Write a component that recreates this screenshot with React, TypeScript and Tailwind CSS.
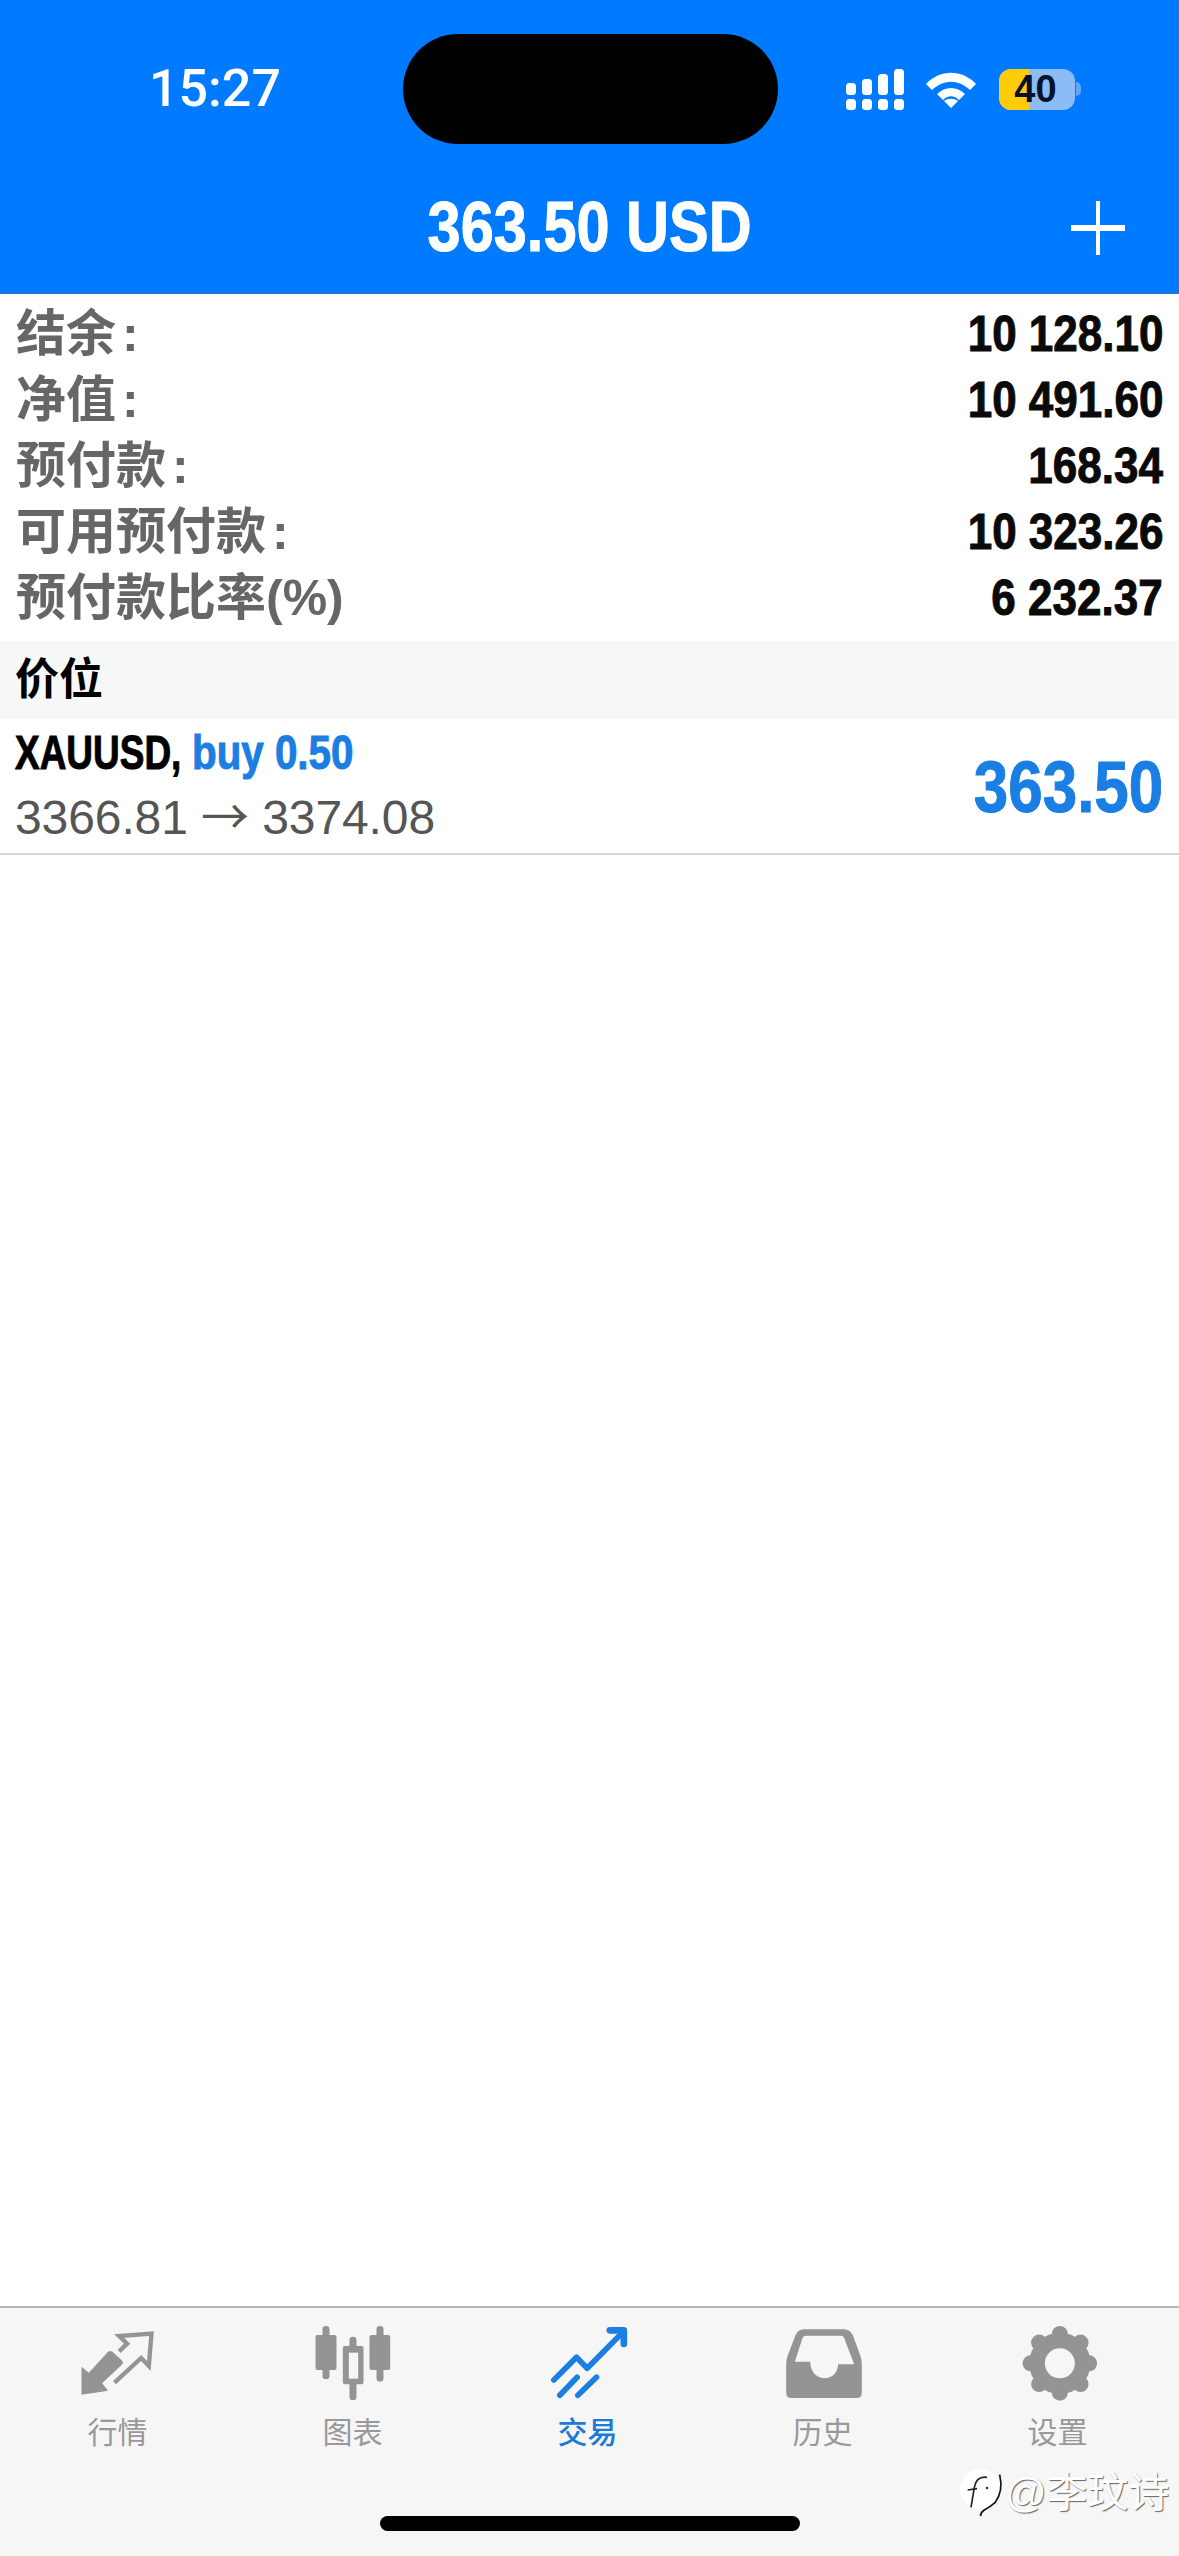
import React from "react";

const SANS = "font-['Liberation_Sans','Noto_Sans_CJK_SC',sans-serif]";

const rows = [
  { label: "结余", colon: true, value: "10 128.10" },
  { label: "净值", colon: true, value: "10 491.60" },
  { label: "预付款", colon: true, value: "168.34" },
  { label: "可用预付款", colon: true, value: "10 323.26" },
  { label: "预付款比率(%)", colon: false, value: "6 232.37" },
];

function Signal() {
  return (
    <svg width="58" height="41" viewBox="0 0 58 41" className="shrink-0">
      <g fill="#fff">
        <rect x="0" y="30" width="10" height="11" rx="3.5" />
        <rect x="16" y="30" width="10" height="11" rx="3.5" />
        <rect x="32" y="30" width="10" height="11" rx="3.5" />
        <rect x="48" y="30" width="10" height="11" rx="3.5" />
        <rect x="0" y="14" width="10" height="12" rx="3.5" />
        <rect x="16" y="10" width="10" height="16" rx="3.5" />
        <rect x="32" y="5" width="10" height="21" rx="3.5" />
        <rect x="48" y="0" width="10" height="26" rx="3.5" />
      </g>
    </svg>
  );
}

function Wifi() {
  return (
    <svg width="50" height="38" viewBox="0 0 50 38" className="shrink-0">
      <path d="M0 14 C14 -1 36 -1 50 14 L44 20 C32 9 18 9 6 20 Z" fill="#fff" />
      <path d="M11 24 C19 16 31 16 39 24 L33 30 C28 25 22 25 17 30 Z" fill="#fff" />
      <path d="M25 38 L18 31 C22 28 28 28 32 31 Z" fill="#fff" />
    </svg>
  );
}

function Battery() {
  return (
    <div className="flex items-center shrink-0">
      <div className="relative w-[76px] h-[41px] rounded-[12px] overflow-hidden bg-[#8cbcf6] flex">
        <div className="w-[30px] bg-[#ffcc0a]" />
        <div className={`absolute inset-0 flex items-center justify-center text-[38px] font-bold text-[#06122a] pr-[3px] ${SANS}`}>
          40
        </div>
      </div>
      <div className="w-[5px] h-[14px] ml-[1px] rounded-r-full bg-[#5fa6f7]" />
    </div>
  );
}

const GRAY = "#949494";
const BLUE = "#1a7ee2";

function IconBox({ children }: { children: React.ReactNode }) {
  return (
    <svg width="100" height="90" viewBox="-7.5 0 300 270" className="shrink-0">
      {children}
    </svg>
  );
}

function MarketIcon() {
  return (
    <IconBox>
      <path d="M33 224 L33 140 L55 158 L112 96 Q119 90 126 95 L155 122 Q160 128 154 134 L95 190 L113 212 Z" fill={GRAY} />
      <path
        d="M146 94 L170 71 L146 48 L243 41 L235 138 L212 114 L132 188"
        fill="none"
        stroke={GRAY}
        strokeWidth="13"
        strokeLinejoin="miter"
      />
    </IconBox>
  );
}

function ChartIcon() {
  return (
    <IconBox>
      <g fill={GRAY}>
        <rect x="51" y="18" width="21" height="160" rx="10" />
        <rect x="30" y="45" width="63" height="105" rx="6" />
        <rect x="213" y="18" width="21" height="167" rx="10" />
        <rect x="192" y="45" width="62" height="105" rx="6" />
        <rect x="132" y="50" width="21" height="190" rx="10" />
        <rect x="112" y="78" width="62" height="115" rx="6" />
      </g>
      <rect x="130" y="98" width="28" height="78" fill="#f6f6f6" />
    </IconBox>
  );
}

function TradeIcon() {
  return (
    <IconBox>
      <g fill="none" stroke={BLUE} strokeLinecap="round" strokeLinejoin="round">
        <path d="M40 180 L108 112 L140 145 L238 46" strokeWidth="17" />
        <path d="M208 31 L250 31 L250 72" strokeWidth="20" />
        <path d="M58 226 L110 172" strokeWidth="17" />
        <path d="M112 226 L168 172" strokeWidth="17" />
      </g>
    </IconBox>
  );
}

function HistoryIcon() {
  return (
    <IconBox>
      <path
        fillRule="evenodd"
        fill={GRAY}
        d="M85 28 L205 28 Q224 28 232 46 L254 106 Q259 120 259 134 L259 218 Q259 234 243 234 L47 234 Q32 234 32 218 L32 134 Q32 120 37 106 L60 46 Q67 28 85 28 Z M92 47 Q84 47 81 54 L58 125 L104 125 C106 190 186 190 188 133 L236 133 L206 54 Q203 47 196 47 Z"
      />
    </IconBox>
  );
}

function GearIcon() {
  const cx = 148;
  const cy = 130;
  const teeth = [0, 1, 2, 3, 4, 5, 6, 7];
  return (
    <IconBox>
      <g fill={GRAY}>
        <circle cx={cx} cy={cy} r="92" />
        {teeth.map((i) => {
          const a = (i * Math.PI) / 4;
          return <circle key={i} cx={cx + 88 * Math.sin(a)} cy={cy - 88 * Math.cos(a)} r="24" />;
        })}
      </g>
      <circle cx={cx} cy={cy} r="45" fill="#f6f6f6" />
    </IconBox>
  );
}

function Tab({ label, active, children }: { label: string; active?: boolean; children: React.ReactNode }) {
  return (
    <div className="flex flex-col items-center">
      {children}
      <div
        className={`mt-[6px] text-[30px] leading-[34px] ${active ? "text-[#1a7ad6] font-medium" : "text-[#999999]"} ${SANS}`}
      >
        {label}
      </div>
    </div>
  );
}

export default function App() {
  return (
    <div className={`relative w-[1179px] h-[2556px] flex flex-col bg-white overflow-hidden ${SANS}`}>
      <header className="h-[294px] shrink-0 bg-[#007aff] pt-[34px] flex flex-col border-b-[2px] border-b-[#1f76d6]">
        <div className="grid grid-cols-[403px_375px_1fr] h-[110px] items-center">
          <div className="pl-[149px] text-[52px] leading-none text-white font-medium font-['Roboto',sans-serif]">15:27</div>
          <div className="h-[110px] rounded-[55px] bg-black" />
          <div className="flex items-center pl-[68px]">
            <Signal />
            <div className="ml-[22px]">
              <Wifi />
            </div>
            <div className="ml-[23px]">
              <Battery />
            </div>
          </div>
        </div>
        <div className="grid grid-cols-[1fr_auto_1fr] items-center mt-[34px] h-[90px]">
          <div />
          <div className="text-[70px] leading-none font-bold text-white scale-x-[0.85] origin-center mt-[8px] [-webkit-text-stroke:1px_currentColor]">
            363.50 USD
          </div>
          <div className="flex justify-end pr-[54px] mt-[10px]">
            <div className="relative w-[54px] h-[54px]">
              <div className="absolute left-[25px] top-0 w-[4px] h-[54px] bg-white" />
              <div className="absolute left-0 top-[24px] w-[54px] h-[6px] bg-white" />
            </div>
          </div>
        </div>
      </header>

      <main className="flex-1 flex flex-col">
        <section className="pt-[7px] pb-[10px] pl-[16px] pr-[16px]">
          {rows.map((r) => (
            <div key={r.label} className="h-[66px] flex items-center justify-between">
              <div className="text-[50px] leading-none font-semibold text-[#666666] whitespace-nowrap">
                {r.label}
                {r.colon && <span className="ml-[6px]">:</span>}
              </div>
              <div className="text-[50px] leading-none font-bold text-[#0a0a0a] whitespace-nowrap scale-x-[0.88] origin-right [-webkit-text-stroke:1px_currentColor]">
                {r.value}
              </div>
            </div>
          ))}
        </section>

        <div className="h-[78px] bg-[#f6f7f7] flex items-center pl-[15px] text-[44px] font-bold text-black leading-none">
          价位
        </div>

        <div className="h-[136px] border-b-[2px] border-b-[#d5d8da] flex items-center justify-between pl-[15px] pr-[16px]">
          <div className="flex flex-col">
            <div className="flex text-[48px] leading-[58px] font-bold whitespace-nowrap mt-[-2px] [-webkit-text-stroke:1px_currentColor]">
              <span className="inline-block w-[177px] text-black scale-x-[0.77] origin-left">XAUUSD,</span>
              <span className="inline-block text-[#1a7ee2] scale-x-[0.84] origin-left">buy 0.50</span>
            </div>
            <div className="text-[48px] leading-[58px] text-[#555555] whitespace-nowrap mt-[2px] tracking-[-0.1px]">
              3366.81 <span className="font-['Noto_Sans_CJK_SC',sans-serif]">→</span> 3374.08
            </div>
          </div>
          <div className="text-[72px] leading-none font-bold text-[#1a7ee2] scale-x-[0.86] origin-right mt-[2px] [-webkit-text-stroke:1px_currentColor]">
            363.50
          </div>
        </div>
      </main>

      <nav className="h-[250px] shrink-0 border-t-[2px] border-t-[#b8b8b8] bg-[#f6f6f6] flex flex-col">
        <div className="grid grid-cols-[repeat(5,235px)] pt-[12px]">
          <Tab label="行情">
            <MarketIcon />
          </Tab>
          <Tab label="图表">
            <ChartIcon />
          </Tab>
          <Tab label="交易" active>
            <TradeIcon />
          </Tab>
          <Tab label="历史">
            <HistoryIcon />
          </Tab>
          <Tab label="设置">
            <GearIcon />
          </Tab>
        </div>
        <div className="flex justify-center mt-[66px]">
          <div className="w-[420px] h-[15px] rounded-full bg-black" />
        </div>
      </nav>

      <div className="absolute left-[959px] top-[2468px] flex items-center">
        <svg width="46" height="50" viewBox="0 0 138 150">
          <ellipse cx="64" cy="64" rx="62" ry="60" fill="#ffffff" />
          <path d="M122 20 Q134 70 108 104 Q92 118 76 126 Q66 132 64 144" fill="none" stroke="#111" strokeWidth="5" />
          <path d="M84 28 Q52 24 46 58 L36 118" fill="none" stroke="#222" strokeWidth="5" />
          <path d="M26 66 L54 62" fill="none" stroke="#222" strokeWidth="5" />
          <circle cx="84" cy="60" r="4" fill="#333" />
        </svg>
        <div className="text-[41px] leading-none text-white whitespace-nowrap [text-shadow:1px_1px_1px_rgba(0,0,0,0.6)]">
          @李玟诗
        </div>
      </div>
    </div>
  );
}
